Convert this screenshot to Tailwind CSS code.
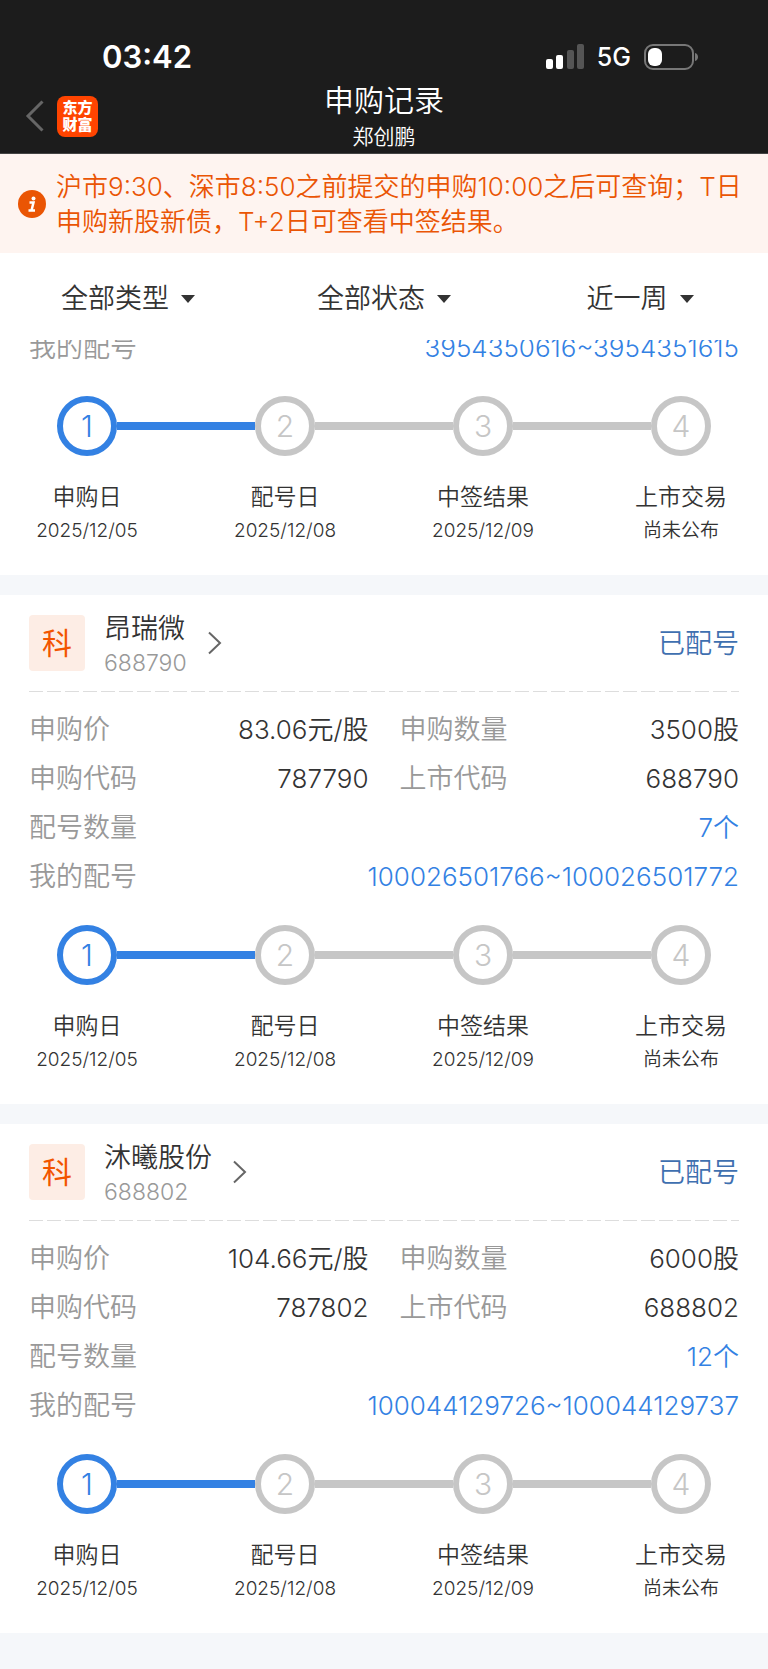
<!DOCTYPE html>
<html lang="zh-CN">
<head>
    <meta charset="UTF-8">
    <meta name="viewport" content="width=device-width, initial-scale=1.0">
    <title>申购记录</title>
    <script src="https://cdn.jsdelivr.net/npm/@tailwindcss/browser@4"></script>
</head>
<body class="flex min-h-screen flex-col bg-[#f5f7fa] font-[Inter,'Noto_Sans_CJK_SC',sans-serif] font-[350] text-[#333333]">

    <header class="border-b border-[#444444] bg-[#1c1c1c] text-white">
        <!-- Status bar -->
        <div class="flex items-center justify-between pt-9 pr-[69px] pl-[102px]">
            <span class="text-[31px] leading-[42px] font-semibold">03:42</span>
            <div class="flex items-center">
                <svg class="h-[26px] w-10" viewBox="0 0 40 26" fill="#ffffff" aria-hidden="true">
                    <rect x="1" y="15" width="7" height="10" rx="2"/>
                    <rect x="11" y="11" width="7" height="14" rx="2"/>
                    <rect x="22" y="6" width="7" height="19" rx="2" opacity=".25"/>
                    <rect x="32" y="0" width="7" height="25" rx="2" opacity=".25"/>
                </svg>
                <span class="mr-[13px] ml-3 text-[25px] leading-[42px] font-medium">5G</span>
                <svg class="h-[26px] w-[55px]" viewBox="0 0 55 26" aria-hidden="true">
                    <rect x="1" y="1" width="48" height="24" rx="8" fill="none" stroke="#777777" stroke-width="2"/>
                    <rect x="4" y="4" width="14" height="18" rx="6" fill="#ffffff"/>
                    <path d="M51 9c4 1 4 7 0 8z" fill="#777777"/>
                </svg>
            </div>
        </div>
        <!-- Title bar -->
        <div class="grid grid-cols-[1fr_auto_1fr] items-center pt-px">
            <div class="flex items-center gap-3 pl-[25px]">
                <a href="#" aria-label="返回">
                    <svg class="h-8 w-5" viewBox="0 0 20 32" fill="none" stroke="#666666" stroke-width="3" aria-hidden="true">
                        <path d="M17.500 1.500 3 16l14.500 14.500"/>
                    </svg>
                </a>
                <a href="#" class="flex size-[41px] flex-col items-center justify-center rounded-lg bg-[#ff4400] text-[15px] leading-[17px] font-black">
                    <span>东方</span>
                    <span>财富</span>
                </a>
            </div>
            <div class="text-center">
                <h1 class="text-[30px] leading-[42px]">申购记录</h1>
                <p class="text-[21px] leading-8">郑创鹏</p>
            </div>
        </div>
    </header>

    <div class="flex items-center bg-[#fef4f0] pt-[15px] pr-4 pb-[14px] pl-[18px] text-[#ea5504]">
        <svg class="size-7 shrink-0" viewBox="0 0 28 28" aria-hidden="true">
            <circle cx="14" cy="14" r="14" fill="#ea5504"/>
            <circle cx="15.500" cy="8.500" r="2" fill="#ffffff"/>
            <path d="M11.500 12.500h4l-2 8M10.500 20.500h6.500" fill="none" stroke="#ffffff" stroke-width="2.500"/>
        </svg>
        <p class="ml-[10px] text-[26px] leading-[35px]">沪市9:30、深市8:50之前提交的申购10:00之后可查询；T日申购新股新债，T+2日可查看中签结果。</p>
    </div>

    <form class="grid grid-cols-3 bg-white pt-[22px] pb-[17px] text-[27px]">
        <label class="flex items-center justify-center gap-3">
            <select aria-label="类型" class="field-sizing-content appearance-none leading-[48px]">
                <option>全部类型</option>
            </select>
            <svg class="h-2 w-[14px]" viewBox="0 0 14 8" fill="#333333" aria-hidden="true"><path d="M0 0h14L7 8z"/></svg>
        </label>
        <label class="flex items-center justify-center gap-3">
            <select aria-label="状态" class="field-sizing-content appearance-none leading-[48px]">
                <option>全部状态</option>
            </select>
            <svg class="h-2 w-[14px]" viewBox="0 0 14 8" fill="#333333" aria-hidden="true"><path d="M0 0h14L7 8z"/></svg>
        </label>
        <label class="flex items-center justify-center gap-3">
            <select aria-label="时间" class="field-sizing-content appearance-none leading-[48px]">
                <option>近一周</option>
            </select>
            <svg class="h-2 w-[14px]" viewBox="0 0 14 8" fill="#333333" aria-hidden="true"><path d="M0 0h14L7 8z"/></svg>
        </label>
    </form>

    <main id="records" class="flex flex-col gap-5 overflow-hidden"></main>

    <script>
        const records = [
            // scrolled partly under the filter bar
            { numbers: '3954350616~3954351615' },
            { name: '昂瑞微', code: '688790', price: '83.06', amount: '3500', applyCode: '787790', count: '7', numbers: '100026501766~100026501772' },
            { name: '沐曦股份', code: '688802', price: '104.66', amount: '6000', applyCode: '787802', count: '12', numbers: '100044129726~100044129737' }
        ];

        const steps = [
            { label: '申购日', date: '2025/12/05', done: true },
            { label: '配号日', date: '2025/12/08' },
            { label: '中签结果', date: '2025/12/09' },
            { label: '上市交易', date: '尚未公布' }
        ];

        const stepList = steps.map((step, i) => `
            <li class="flex w-[60px] flex-col items-center whitespace-nowrap">
                <span class="flex size-[60px] items-center justify-center rounded-full border-6 text-[30px] font-light ${step.done ? 'border-[#3381e3] text-[#3381e3]' : 'border-[#c6c6c6] text-[#c6c6c6]'}">${i + 1}</span>
                <span class="mt-[25px] text-[23px] leading-8">${step.label}</span>
                <span class="text-[19px] leading-9">${step.date}</span>
            </li>
            ${i < steps.length - 1 ? `<li aria-hidden="true" class="mt-[26px] h-2 flex-1 ${step.done ? 'bg-[#3381e3]' : 'bg-[#c6c6c6]'}"></li>` : ''}
        `).join('');

        const header = record => `
            <a href="#" class="flex items-center">
                <span class="flex size-14 items-center justify-center rounded bg-[#fdede5] text-[30px] font-normal text-[#f25500]">科</span>
                <span class="ml-[19px] pt-2">
                    <span class="block text-[27px] leading-8">${record.name}</span>
                    <span class="block text-[23px] leading-9 text-[#999999]">${record.code}</span>
                </span>
                <svg class="ml-5 h-6 w-4" viewBox="0 0 16 24" fill="none" stroke="#666666" stroke-width="2" aria-hidden="true"><path d="M2 1.500 13 12 2 22.500"/></svg>
                <span class="ml-auto text-[27px] text-[#3f70b0]">已配号</span>
            </a>
            <div class="mt-[10px] mb-[13px] h-px bg-[repeating-linear-gradient(90deg,#dddddd_0_14px,transparent_14px_18px)]"></div>
        `;

        const details = record => `
            <dl class="grid auto-rows-[49px] grid-cols-2 gap-x-[31px]">
                <div class="flex items-center justify-between"><dt class="text-[#999999]">申购价</dt><dd class="text-[26px]">${record.price}元/股</dd></div>
                <div class="flex items-center justify-between"><dt class="text-[#999999]">申购数量</dt><dd class="text-[26px]">${record.amount}股</dd></div>
                <div class="flex items-center justify-between"><dt class="text-[#999999]">申购代码</dt><dd class="text-[26px]">${record.applyCode}</dd></div>
                <div class="flex items-center justify-between"><dt class="text-[#999999]">上市代码</dt><dd class="text-[26px]">${record.code}</dd></div>
                <div class="col-span-2 flex items-center justify-between"><dt class="text-[#999999]">配号数量</dt><dd class="text-[26px] text-[#3381e3]">${record.count}个</dd></div>
            </dl>
        `;

        document.getElementById('records').innerHTML = records.map(record => `
            <section class="bg-white pb-[26px] ${record.name ? 'pt-[10px]' : '-mt-[17px]'}">
                <div class="px-[29px] text-[27px] leading-[49px]">
                    ${record.name ? header(record) + details(record) : ''}
                    <dl class="flex justify-between"><dt class="text-[#999999]">我的配号</dt><dd class="text-[26px] text-[#3381e3]">${record.numbers}</dd></dl>
                </div>
                <ol class="mt-6 flex px-[57px]">${stepList}</ol>
            </section>
        `).join('');
    </script>

</body>
</html>
